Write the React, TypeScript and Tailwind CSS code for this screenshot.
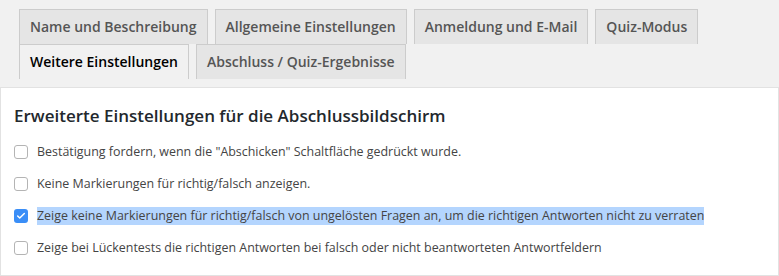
import { Check } from 'lucide-react';

const rowOne = ['Name und Beschreibung', 'Allgemeine Einstellungen', 'Anmeldung und E-Mail', 'Quiz-Modus'];

const Tab = ({ label, active = false }: { label: string; active?: boolean }) => (
    <div
        className={
            active
                ? 'border border-b-0 border-[#cccccc] bg-[#f1f1f1] px-[10px] py-[5px] text-[14px] leading-[24px] font-semibold text-black'
                : 'border border-b-0 border-[#cccccc] bg-[#e5e5e5] px-[10px] py-[5px] text-[14px] leading-[24px] font-semibold text-[#555555]'
        }
    >
        {label}
    </div>
);

const Option = ({ label, checked = false }: { label: string; checked?: boolean }) => (
    <div className="flex items-center h-[32px]">
        {checked ? (
            <span className="w-[14px] h-[14px] rounded-[3px] bg-[#3a8ef7] flex items-center justify-center shrink-0">
                <Check className="w-[10px] h-[10px] text-white" strokeWidth={3.5} />
            </span>
        ) : (
            <span className="w-[14px] h-[14px] rounded-[3px] border border-[#b4b4b4] bg-white shrink-0" />
        )}
        <span className={checked ? 'ml-[9px] text-[12.45px] leading-[18px] text-[#444444] bg-[#b4d5fe]' : 'ml-[9px] text-[12.45px] leading-[18px] text-[#444444]'}>
            {label}
        </span>
    </div>
);

export default function App() {
    return (
        <div className="w-[779px] h-[276px] bg-[#f1f1f1] overflow-hidden" style={{ fontFamily: '"Open Sans", "Liberation Sans", sans-serif' }}>
            <div className="pt-[9px] pl-[19px]">
                <div className="flex gap-[7px]">
                    {rowOne.map((t) => (
                        <Tab key={t} label={t} />
                    ))}
                </div>
                <div className="flex gap-[7px]">
                    <Tab label="Weitere Einstellungen" active />
                    <Tab label="Abschluss / Quiz-Ergebnisse" />
                </div>
            </div>

            <div className="mt-[8px] h-[189px] bg-white border border-[#e2e2e2] px-[13px] pt-[16px]">
                <h2 className="text-[17px] leading-[24px] font-semibold text-[#23282d] mb-[8px]">
                    Erweiterte Einstellungen für die Abschlussbildschirm
                </h2>
                <Option label='Bestätigung fordern, wenn die "Abschicken" Schaltfläche gedrückt wurde.' />
                <Option label="Keine Markierungen für richtig/falsch anzeigen." />
                <Option label="Zeige keine Markierungen für richtig/falsch von ungelösten Fragen an, um die richtigen Antworten nicht zu verraten" checked />
                <Option label="Zeige bei Lückentests die richtigen Antworten bei falsch oder nicht beantworteten Antwortfeldern" />
            </div>
        </div>
    );
}
